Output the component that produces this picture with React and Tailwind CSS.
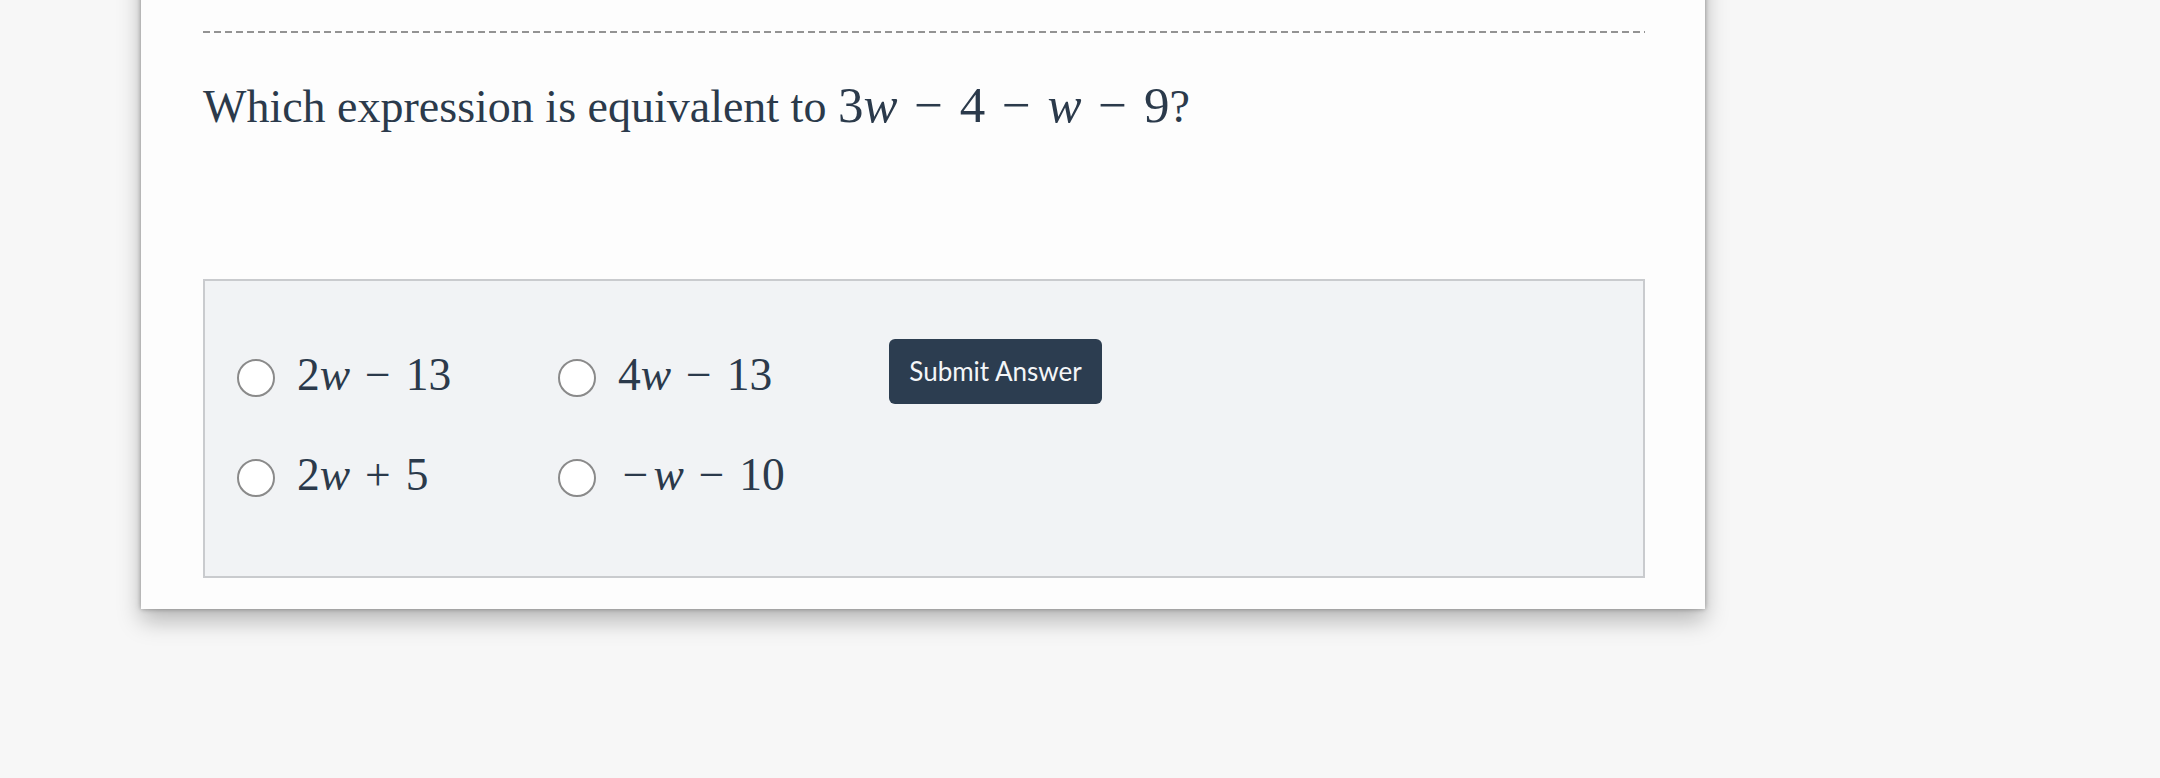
function W() {
  return <span className="italic">w</span>;
}

// binary operator with KaTeX-like medium spacing on each side
function Op({ children }) {
  return <span className="inline-block w-[1.222em] text-center">{children}</span>;
}

function Neg() {
  return <span className="inline-block w-[0.778em] text-center">−</span>;
}

function Radio() {
  return <span className="block h-[38px] w-[38px] shrink-0 rounded-full border-[2.5px] border-[#8a8a8a] bg-white" />;
}

function Choice({ children }) {
  return (
    <label className="flex items-center gap-[22px]">
      <Radio />
      <span className="whitespace-nowrap pb-[6px] font-['Liberation_Serif',serif] text-[45.5px] leading-none text-[#2b3a4b]">
        {children}
      </span>
    </label>
  );
}

export default function App() {
  return (
    <div className="h-[778px] overflow-hidden bg-[#f7f7f7]">
      <div className="ml-[141px] -mt-[40px] w-[1564px] bg-[#fdfdfd] pb-[31px] pl-[62px] pr-[60px] pt-[71px] shadow-[0_12px_22px_rgba(0,0,0,0.26),0_0_5px_rgba(0,0,0,0.35)]">
        <div className="h-[2px] bg-[repeating-linear-gradient(90deg,#939393_0_7px,transparent_7px_11px)]" />

        <p className="mt-[41px] whitespace-nowrap font-['Liberation_Serif',serif] text-[46px] leading-[63px] text-[#2b3a4b]">
          Which expression is equivalent to{" "}
          <span className="text-[51px]">
            3<W />
            <Op>−</Op>4<Op>−</Op>
            <W />
            <Op>−</Op>9
          </span>
          ?
        </p>

        <div className="mt-[141px] border-2 border-[#c9cbce] bg-[#f1f3f5] pb-[48px] pl-[32px] pt-[47px]">
          <div className="grid grid-cols-[321px_331px_auto] grid-rows-[100px_100px] items-center">
            <Choice>
              2<W />
              <Op>−</Op>13
            </Choice>
            <Choice>
              4<W />
              <Op>−</Op>13
            </Choice>
            <button className="mt-[11px] h-[65px] w-[213px] self-start rounded-[6px] bg-[#2c3d50] font-['Lato',sans-serif] text-[26px] text-[#f4f6f8]">
              Submit Answer
            </button>
            <Choice>
              2<W />
              <Op>+</Op>5
            </Choice>
            <Choice>
              <Neg />
              <W />
              <Op>−</Op>10
            </Choice>
          </div>
        </div>
      </div>
    </div>
  );
}
